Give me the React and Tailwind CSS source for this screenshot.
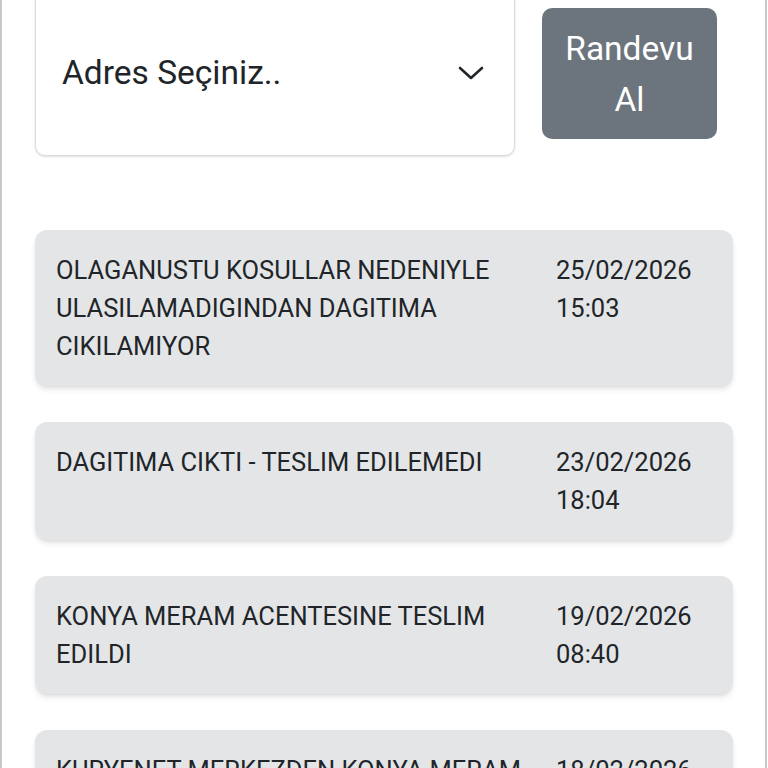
import * as React from "react"

const events = [
  { text: "OLAGANUSTU KOSULLAR NEDENIYLE ULASILAMADIGINDAN DAGITIMA CIKILAMIYOR", date: "25/02/2026", time: "15:03" },
  { text: "DAGITIMA CIKTI - TESLIM EDILEMEDI", date: "23/02/2026", time: "18:04" },
  { text: "KONYA MERAM ACENTESINE TESLIM EDILDI", date: "19/02/2026", time: "08:40" },
  { text: "KURYENET MERKEZDEN KONYA MERAM ACENTESINE GONDERILDI", date: "18/02/2026", time: "21:12" },
]

export default function App() {
  return (
    <div className="h-screen overflow-hidden bg-white font-['Roboto','Liberation_Sans',sans-serif] text-[#212529]">
      <div className="w-[767px] min-h-screen border-x-2 border-[#c8c8c8] -mt-[10px] pl-[33px] pr-[32px]">
        <div className="flex items-start">
          <div className="w-[480px] h-[166px] bg-white border border-[#dcdcdc] rounded-[10px] shadow-sm flex items-center justify-between pl-[26px] pr-[30px]">
            <span className="text-[33.5px]">Adres Seçiniz..</span>
            <svg width="26" height="16" viewBox="0 0 26 16" fill="none" stroke="#212529" strokeWidth="2.6" strokeLinecap="round" strokeLinejoin="round">
              <polyline points="2,3 13,13 24,3" />
            </svg>
          </div>
          <button className="ml-[27px] mt-[18px] w-[175px] h-[131px] bg-[#6c757d] rounded-[10px] text-white text-[33.5px] leading-[51px] px-[18px]">
            Randevu Al
          </button>
        </div>

        <div className="mt-[74px] flex flex-col gap-[36px]">
          {events.map((e, i) => (
            <div key={i} className="bg-[#e4e5e7] rounded-[12px] shadow-md px-[21px] py-[21px] flex gap-[16px] text-[25.5px] leading-[38px]">
              <div className="w-[484px]">{e.text}</div>
              <div className="flex-1">
                <div>{e.date}</div>
                <div>{e.time}</div>
              </div>
            </div>
          ))}
        </div>
      </div>
    </div>
  )
}
